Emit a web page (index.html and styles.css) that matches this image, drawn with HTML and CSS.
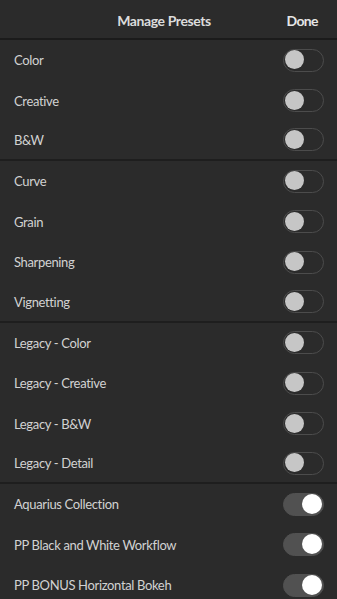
FILE: index.html
```html
<!DOCTYPE html>
<html>
<head>
<meta charset="utf-8">
<link rel="stylesheet" href="styles.css">
</head>
<body>
<div class="screen">
  <header class="header">
    <div class="title">Manage Presets</div>
    <div class="done">Done</div>
  </header>
  <div class="list">
    <div class="row"><span class="label">Color</span><span class="toggle"></span></div>
    <div class="row"><span class="label">Creative</span><span class="toggle"></span></div>
    <div class="row last"><span class="label">B&amp;W</span><span class="toggle"></span></div>
    <div class="row"><span class="label">Curve</span><span class="toggle"></span></div>
    <div class="row"><span class="label">Grain</span><span class="toggle"></span></div>
    <div class="row"><span class="label">Sharpening</span><span class="toggle"></span></div>
    <div class="row last"><span class="label">Vignetting</span><span class="toggle"></span></div>
    <div class="row"><span class="label">Legacy - Color</span><span class="toggle"></span></div>
    <div class="row"><span class="label">Legacy - Creative</span><span class="toggle"></span></div>
    <div class="row"><span class="label">Legacy - B&amp;W</span><span class="toggle"></span></div>
    <div class="row last"><span class="label">Legacy - Detail</span><span class="toggle"></span></div>
    <div class="row"><span class="label">Aquarius Collection</span><span class="toggle on"></span></div>
    <div class="row"><span class="label">PP Black and White Workflow</span><span class="toggle on"></span></div>
    <div class="row"><span class="label">PP BONUS Horizontal Bokeh</span><span class="toggle on"></span></div>
  </div>
</div>
</body>
</html>
```

FILE: styles.css
```css
* { box-sizing: border-box; }
html, body {
  margin: 0;
  padding: 0;
  background: #2b2b2b;
}
.screen {
  width: 337px;
  height: 599px;
  overflow: hidden;
  background: #2b2b2b;
  font-family: "Lato", "Open Sans", sans-serif;
  color: #d4d4d4;
}
.header {
  height: 40px;
  border-bottom: 2px solid #1b1b1b;
  display: flex;
  align-items: center;
  justify-content: center;
  position: relative;
}
.title {
  font-size: 14px;
  font-weight: 700;
  letter-spacing: -0.4px;
  color: #dcdcdc;
  margin-left: -9px;
  padding-top: 2px;
}
.done {
  position: absolute;
  right: 19px;
  top: 0;
  height: 38px;
  display: flex;
  align-items: center;
  font-size: 14px;
  font-weight: 700;
  letter-spacing: -0.6px;
  color: #e6e6e6;
  padding-top: 2px;
}
.row {
  height: 40.4px;
  display: flex;
  align-items: center;
  justify-content: space-between;
  padding: 0 14px 0 14px;
}
.row.last {
  border-bottom: 2px solid #1e1e1e;
}
.label {
  font-size: 13px;
  letter-spacing: -0.35px;
  color: #d2d2d2;
}
.toggle {
  width: 41px;
  height: 23px;
  border-radius: 12px;
  border: 1.5px solid #4c4c4c;
  background: transparent;
  position: relative;
  flex: none;
  margin-right: -1px;
}
.toggle::after {
  content: "";
  position: absolute;
  width: 19px;
  height: 19px;
  border-radius: 50%;
  background: #c6c6c6;
  left: 1px;
  top: 0.5px;
}
.toggle.on {
  background: #515151;
  border-color: #515151;
}
.toggle.on::after {
  background: #ffffff;
  left: auto;
  right: 1px;
  width: 20px;
  height: 20px;
  top: 0;
}
```
